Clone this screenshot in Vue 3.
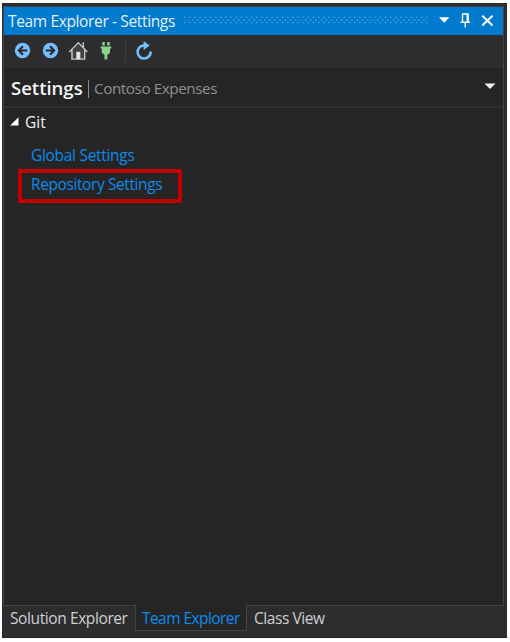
<script setup>
const tabs = [
  { id: 'solution', label: 'Solution Explorer' },
  { id: 'team', label: 'Team Explorer', active: true },
  { id: 'class', label: 'Class View' },
]
</script>

<template>
  <main class="page">
    <div class="window">
      <section class="panel">
        <header class="titlebar">
          <span class="title">Team Explorer - Settings</span>
          <svg class="grip" width="245" height="8">
            <defs>
              <pattern id="dots" width="5.15" height="8" patternUnits="userSpaceOnUse">
                <path d="M0 .6h1.4v1.5H0zM2.6 3.2H4v1.5H2.6zM0 5.8h1.4v1.5H0z" fill="#4a9fdc" />
              </pattern>
            </defs>
            <rect width="245" height="8" fill="url(#dots)" />
          </svg>
          <svg class="chrome" width="60" height="20" viewBox="437 10 60 20">
            <path d="M439 17.2h10.4l-5.2 5.6z" fill="#fff" />
            <path d="M462.5 22V14h5.6v8M460.6 22.2h9.4M465.3 22.5v5" fill="none" stroke="#fff" stroke-width="1.4" />
            <path d="M467.5 14v8" stroke="#fff" stroke-width="2" />
            <path d="M482.3 15.7l10.2 9.8m0-9.8l-10.2 9.8" stroke="#fff" stroke-width="2" />
          </svg>
        </header>
        <nav class="toolbar">
          <svg width="160" height="33" viewBox="4 35 160 33">
            <g fill="#75bfff">
              <circle cx="22.5" cy="50.5" r="7.7" />
              <circle cx="50.5" cy="50.5" r="7.7" />
            </g>
            <g fill="none" stroke="#29292c" stroke-width="2">
              <path d="M27.3 50.5h-8M23 46.2l-4.2 4.3 4.2 4.3" />
              <path d="M45.7 50.5h8M50 46.2l4.2 4.3-4.2 4.3" />
            </g>
            <path d="M69.3 52l9-9.2 9 9.2M72 50v9.1h12.6V50M83.3 47.5v-5.2" fill="none" stroke="#c5c5c5" stroke-width="1.5" />
            <path d="M73 50l5.3-5.4 5.3 5.4v8.3H73z" fill="#434346" />
            <path d="M76.3 51.8h4v7.5h-4z" fill="#e4e4e4" />
            <path d="M102.3 42h2.5v3.5h-2.5zM107.2 42h2.5v3.5h-2.5zM100.7 46.5h10.5v2H110v4.3l-2.7 2.2v4.5h-2.8V55l-2.7-2.2v-4.3h-1.1z" fill="#86d486" />
            <path d="M125.5 40v22" stroke="#3f3f42" />
            <path d="M144.8 45.5h-1.2a6.5 6.5 0 1 0 7 6" fill="none" stroke="#75bfff" stroke-width="2.6" />
            <path d="M143.6 41l6 4.6-6 4.5z" fill="#75bfff" />
          </svg>
        </nav>
        <div class="heading">
          <h1>Settings</h1>
          <i class="divider"></i>
          <span class="project">Contoso Expenses</span>
          <svg class="expand" width="12" height="7"><path d="M.5.5h11L6 6z" fill="#f1f1f1" /></svg>
        </div>
        <div class="section">
          <svg width="9" height="9"><path d="M8.5.3v8.2H.2z" fill="#fff" /></svg>
          <span>Git</span>
        </div>
        <div class="links">
          <a class="global">Global Settings</a>
          <a class="repository">Repository Settings</a>
        </div>
      </section>
      <footer class="tabs">
        <div v-for="tab in tabs" :key="tab.id" class="tab" :class="[tab.id, { active: tab.active }]">
          <span>{{ tab.label }}</span>
        </div>
      </footer>
    </div>
  </main>
</template>

<style>
body { background: #fff; overflow: hidden; }
</style>

<style scoped>
* { box-sizing: border-box; }
.page {
  width: 510px; height: 642px; padding: 3px 3px 4px 2px;
  font: 15.5px/20px "Open Sans", "Noto Sans", sans-serif;
  white-space: nowrap;
}
.window { height: 635px; background: #2d2d30; padding-top: 3px; border-bottom: 1px solid #241b26; }
.panel {
  width: 501px; height: 600px; margin-left: 1px;
  border: 1px solid #434346; background: #252526;
}
.titlebar { display: flex; height: 28px; background: #007acc; color: #e3f1fb; padding-left: 4px; align-items: center; }
.title { width: 176px; letter-spacing: -0.36px; }
.grip { flex: none; margin-top: -2px; }
.chrome { margin-left: 8px; margin-top: -2px; flex: none; }
.toolbar { height: 33px; background: #2d2d30; }
.toolbar svg { display: block; }
.heading { height: 40px; display: flex; align-items: center; padding-left: 7px; border-bottom: 2px solid #303033; }
h1 { margin: 2px 0 0; width: 77px; color: #f5f5f5; font-size: 18.5px; line-height: 24px; font-weight: 600; letter-spacing: 0; }
.divider { width: 1px; height: 18px; background: #8c8c8c; margin-top: 3px; }
.project { margin-left: 5px; margin-top: 2px; color: #8f8f8f; font-size: 15.3px; letter-spacing: -0.46px; }
.expand { margin-left: auto; margin-right: 7px; margin-top: -2px; }
.section { height: 27px; display: flex; align-items: center; padding-left: 6px; gap: 7px; color: #f1f1f1; }
.section svg { margin-top: -1px; }
.section span { margin-left: -1px; }
.links { display: flex; flex-direction: column; align-items: flex-start; padding: 10px 0 0 14px; color: #0a8ced; }
.global { margin-left: 13px; height: 24px; line-height: 20px; letter-spacing: -0.3px; }
.repository { width: 164px; height: 34px; border: 4px solid #c00000; padding-left: 9px; line-height: 22px; letter-spacing: -0.4px; }
.tabs { display: flex; height: 30px; margin-top: -1px; padding-left: 1px; }
.tab { height: 26px; color: #d0d0d0; padding: 3px 0 0 7px; }
.solution { width: 132px; letter-spacing: -0.4px; }
.team { width: 112px; letter-spacing: -0.56px; }
.class { letter-spacing: -0.45px; }
.tab.active { color: #0a8ced; background: #252526; border: 1px solid #434346; border-top: 0; padding-left: 6px; position: relative; }
</style>
